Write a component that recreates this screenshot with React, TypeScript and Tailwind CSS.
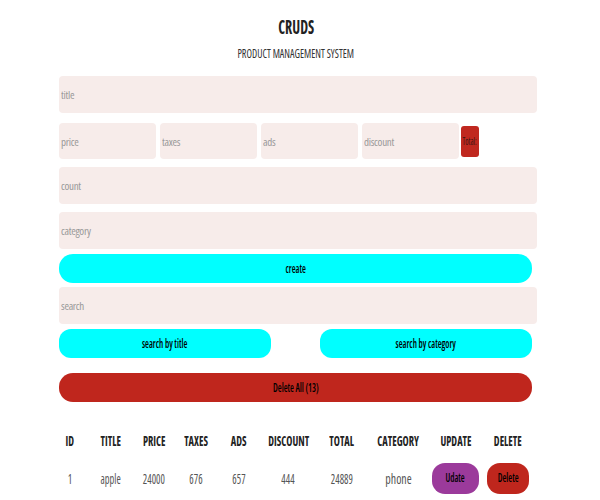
import React from "react";

const products = Array.from({ length: 13 }, (_, i) => ({
    id: i + 1,
    title: "apple",
    price: 24000,
    taxes: 676,
    ads: 657,
    discount: 444,
    total: 24889,
    category: "phone",
}));

// the design font is narrower than Open Sans Condensed, so squeeze it a bit
const Narrow = ({ children, className = "" }: { children: React.ReactNode; className?: string }) => (
    <span className={"inline-block origin-center scale-x-[0.74] whitespace-nowrap " + className}>{children}</span>
);

const inputCls =
    "block w-full h-[37px] rounded-[4px] bg-[#f7ecea] px-[2px] text-[11px] tracking-[-0.3px] text-[#333] outline-none placeholder:text-[#999]";

const btnText = "text-[12px] font-semibold text-black";

export default function App() {
    return (
        <div className="h-screen overflow-y-scroll bg-white font-['Open_Sans',sans-serif] font-stretch-condensed">
            <div className="pb-10">
                {/* HEADER */}
                <div className="pr-[8px] pt-[14px] text-center">
                    <h2 className="text-[19px] font-bold leading-[26px] text-[#222]">
                        <Narrow className="scale-x-[0.8]">CRUDS</Narrow>
                    </h2>
                    <p className="mt-[5px] text-[13px] leading-[16px] text-[#333]">
                        <Narrow className="scale-x-[0.78]">PRODUCT MANAGEMENT SYSTEM</Narrow>
                    </p>
                </div>

                {/* INPUTS */}
                <div className="ml-[59px] mt-[15px] w-[478px]">
                    <input className={inputCls} placeholder="title" />
                    <div className="mt-[10px] flex items-center gap-[4px]">
                        <input className={inputCls + " !w-[97px] !h-[36px]"} placeholder="price" />
                        <input className={inputCls + " !w-[97px] !h-[36px]"} placeholder="taxes" />
                        <input className={inputCls + " !w-[97px] !h-[36px]"} placeholder="ads" />
                        <input className={inputCls + " !w-[97px] !h-[36px]"} placeholder="discount" />
                        <small className="-ml-[2px] flex h-[31px] w-[18px] items-center justify-center overflow-hidden rounded-[3px] bg-[#c0281f] text-[10px] text-[#3a1412]">
                            <Narrow className="scale-x-[0.7]">Total:</Narrow>
                        </small>
                    </div>
                    <input className={inputCls + " mt-[8px]"} placeholder="count" />
                    <input className={inputCls + " mt-[8px]"} placeholder="category" />
                    <button className={"mt-[5px] h-[29px] w-[473px] rounded-[14px] bg-[#00ffff] " + btnText}>
                        <Narrow>create</Narrow>
                    </button>

                    <input className={inputCls + " mt-[4px]"} placeholder="search" />
                    <div className="mt-[5px] flex w-[473px] justify-between">
                        <button className={"h-[29px] w-[212px] rounded-[12px] bg-[#00ffff] " + btnText}>
                            <Narrow>search by title</Narrow>
                        </button>
                        <button className={"h-[29px] w-[212px] rounded-[12px] bg-[#00ffff] " + btnText}>
                            <Narrow>search by category</Narrow>
                        </button>
                    </div>

                    <button className={"mt-[15px] h-[29px] w-[473px] rounded-[14px] bg-[#bf261d] " + btnText}>
                        <Narrow className="scale-x-[0.7]">Delete All (13)</Narrow>
                    </button>
                </div>

                {/* TABLE */}
                <table className="ml-[51px] mt-[23px] w-[482px] table-fixed border-collapse text-center">
                    <colgroup>
                        <col className="w-[38px]" />
                        <col className="w-[43px]" />
                        <col className="w-[44px]" />
                        <col className="w-[40px]" />
                        <col className="w-[45px]" />
                        <col className="w-[53px]" />
                        <col className="w-[55px]" />
                        <col className="w-[59px]" />
                        <col className="w-[55px]" />
                        <col className="w-[50px]" />
                    </colgroup>
                    <thead>
                        <tr className="h-[30px] text-[14px] font-bold text-[#222]">
                            {["ID", "TITLE", "PRICE", "TAXES", "ADS", "DISCOUNT", "TOTAL", "CATEGORY", "UPDATE", "DELETE"].map((h) => (
                                <th key={h}>
                                    <Narrow className="scale-x-[0.72]">{h}</Narrow>
                                </th>
                            ))}
                        </tr>
                    </thead>
                    <tbody>
                        {products.map((p) => (
                            <tr key={p.id} className="h-[46px] text-[14px] text-[#555]">
                                <td><Narrow className="scale-x-[0.72]">{p.id}</Narrow></td>
                                <td><Narrow className="scale-x-[0.8]">{p.title}</Narrow></td>
                                <td><Narrow className="scale-x-[0.72]">{p.price}</Narrow></td>
                                <td><Narrow className="scale-x-[0.72]">{p.taxes}</Narrow></td>
                                <td><Narrow className="scale-x-[0.72]">{p.ads}</Narrow></td>
                                <td><Narrow className="scale-x-[0.72]">{p.discount}</Narrow></td>
                                <td><Narrow className="scale-x-[0.72]">{p.total}</Narrow></td>
                                <td><Narrow className="scale-x-[0.85]">{p.category}</Narrow></td>
                                <td>
                                    <button className={"h-[31px] w-[47px] rounded-[13px] bg-[#9b3a9b] " + btnText}>
                                        <Narrow>Udate</Narrow>
                                    </button>
                                </td>
                                <td>
                                    <button className={"h-[31px] w-[42px] rounded-[13px] bg-[#bf261d] " + btnText}>
                                        <Narrow>Delete</Narrow>
                                    </button>
                                </td>
                            </tr>
                        ))}
                    </tbody>
                </table>
            </div>
        </div>
    );
}
